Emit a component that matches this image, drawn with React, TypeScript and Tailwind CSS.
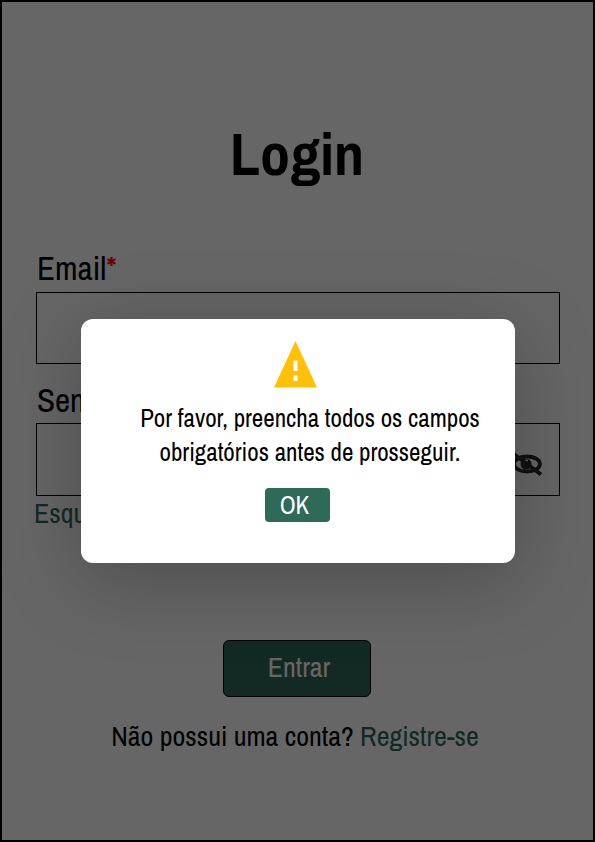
import { useState } from "react";

function EyeOffIcon() {
  return (
    <svg viewBox="0 0 36 28" className="h-7 w-9" fill="none" stroke="#2b2b2b" aria-hidden="true">
      <ellipse cx="20" cy="14" rx="13" ry="7.500" strokeWidth="3.800" />
      <circle cx="19" cy="14" r="5.500" fill="#2b2b2b" stroke="none" />
      <path d="M17.500 10.500 q1.500 -1.500 4 -1 l-1.500 2.500 z" fill="#fff" stroke="none" />
      <path d="M4 2 L34 24.500" strokeWidth="4" />
    </svg>
  );
}

function WarningIcon() {
  return (
    <svg viewBox="0 0 44 48" className="h-12 w-11" aria-hidden="true">
      <path d="M21.500 0 L43 46.500 H0 Z" fill="#ffc107" />
      <path d="M19.500 19.500 h4 v10.500 h-4 Z M19.500 34.500 h4 v5.500 h-4 Z" fill="#fff" />
    </svg>
  );
}

export default function App() {
  const [open, setOpen] = useState(true);

  return (
    <div className="relative min-h-screen border-2 border-black bg-white font-['Archivo_Narrow','Liberation_Sans_Narrow','Liberation_Sans',sans-serif] text-black">
      <main className="pt-[120px] pr-[33px] pb-20 pl-[34px]">
        <h1 className="pr-0.5 text-center text-[60px] leading-[64px] font-bold">Login</h1>
        <form className="mt-[62px] flex flex-col" onSubmit={(e) => e.preventDefault()}>
          <label htmlFor="email" className="mb-1 pl-px text-[33px] leading-10">
            Email<span className="text-[#ff0000]">*</span>
          </label>
          <input id="email" type="email" className="h-[72px] w-full border border-black px-4 text-2xl" />
          <label htmlFor="password" className="mt-4 mb-[3px] pl-px text-[33px] leading-10">
            Senha<span className="text-[#ff0000]">*</span>
          </label>
          <div className="flex h-[73px] w-full items-center border border-black pr-4">
            <input id="password" type="password" className="h-full min-w-0 grow px-4 text-2xl" />
            <button type="button" aria-label="Mostrar senha" className="pt-2">
              <EyeOffIcon />
            </button>
          </div>
          <a href="#recuperar" className="-ml-0.5 self-start text-[28px] leading-[34px] text-[#2d6a57]">
            Esqueceu a senha?
          </a>
          <button type="submit" className="mt-[110px] mr-0.5 h-[57px] w-[148px] self-center rounded-md border border-black bg-[#2d6a57] pb-1 pl-1 text-[28px] leading-9 text-white">
            Entrar
          </button>
        </form>
        <p className="mt-[19px] pr-1.5 text-center text-[28px] leading-10">
          Não possui uma conta?{" "}
          <a href="#registro" className="text-[#2d6a57]">Registre-se</a>
        </p>
      </main>
      {open && (
        <div className="absolute inset-0 flex items-center justify-center bg-black/60 px-4 pt-10">
          <div
            role="alertdialog"
            aria-modal="true"
            aria-describedby="message"
            className="flex w-full max-w-[434px] flex-col items-center rounded-xl bg-white pt-[22px] pb-[41px] shadow-[0_16px_80px_rgba(0,0,0,0.25)]"
          >
            <div className="pr-1">
              <WarningIcon />
            </div>
            <p id="message" className="mt-3 pl-[25px] text-center text-[25px] leading-[34px]">
              Por favor, preencha todos os campos
              <br />
              obrigatórios antes de prosseguir.
            </p>
            <button
              type="button"
              onClick={() => setOpen(false)}
              className="mt-[19px] h-[34px] w-[65px] rounded bg-[#2d6a57] pr-1.5 text-[25px] leading-[34px] text-white"
            >
              OK
            </button>
          </div>
        </div>
      )}
    </div>
  );
}
